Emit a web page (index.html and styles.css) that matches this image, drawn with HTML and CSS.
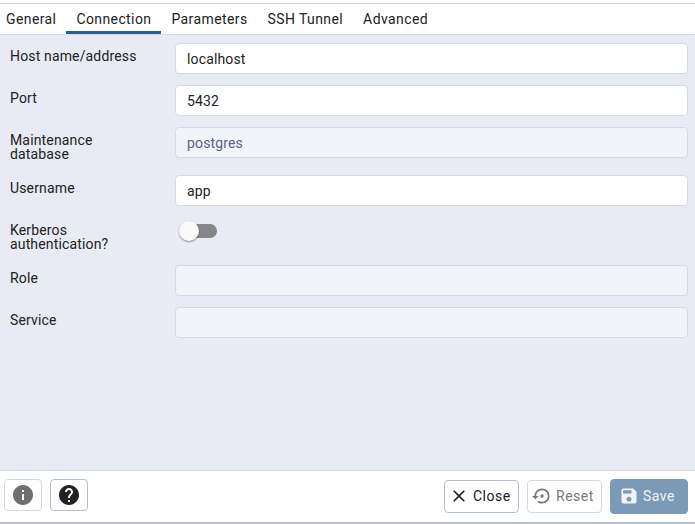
FILE: index.html
```html
<!DOCTYPE html>
<html lang="en">
<head>
<meta charset="utf-8">
<title>Register Server</title>
<link rel="stylesheet" href="styles.css">
</head>
<body>
<div class="dialog">
  <nav class="tabs">
    <a class="tab">General</a>
    <a class="tab active">Connection</a>
    <a class="tab">Parameters</a>
    <a class="tab">SSH Tunnel</a>
    <a class="tab">Advanced</a>
  </nav>
  <main class="form">
    <div class="row"><label>Host name/address</label><div class="input">localhost</div></div>
    <div class="row"><label>Port</label><div class="input">5432</div></div>
    <div class="row"><label>Maintenance database</label><div class="input disabled">postgres</div></div>
    <div class="row"><label>Username</label><div class="input">app</div></div>
    <div class="row"><label>Kerberos authentication?</label><div class="switch"><span class="thumb"></span></div></div>
    <div class="row"><label>Role</label><div class="input disabled"></div></div>
    <div class="row"><label>Service</label><div class="input disabled"></div></div>
  </main>
  <footer class="footer">
    <button class="icon-btn muted"><svg viewBox="0 0 24 24" width="24" height="24"><path d="M12 2C6.48 2 2 6.48 2 12s4.480 10 10 10 10-4.480 10-10S17.520 2 12 2zm1 15h-2v-6h2v6zm0-8h-2V7h2v2z"/></svg></button>
    <button class="icon-btn"><svg viewBox="0 0 24 24" width="24" height="24"><path d="M12 2C6.480 2 2 6.480 2 12s4.480 10 10 10 10-4.480 10-10S17.520 2 12 2zm1 17h-2v-2h2v2zm2.070-7.750l-.9.920C13.450 12.900 13 13.500 13 15h-2v-.5c0-1.100.45-2.100 1.170-2.830l1.240-1.260c.37-.36.59-.86.59-1.410 0-1.100-.9-2-2-2s-2 .9-2 2H8c0-2.210 1.790-4 4-4s4 1.790 4 4c0 .88-.36 1.680-.93 2.250z"/></svg></button>
    <span class="spacer"></span>
    <button class="btn close"><svg viewBox="0 0 24 24" width="20" height="20"><path d="M19 6.410L17.590 5 12 10.590 6.410 5 5 6.410 10.590 12 5 17.590 6.410 19 12 13.410 17.590 19 19 17.590 13.410 12z"/></svg>Close</button>
    <button class="btn reset"><svg viewBox="0 0 24 24" width="20" height="20"><path d="M14 12c0-1.100-.9-2-2-2s-2 .9-2 2 .9 2 2 2 2-.9 2-2zm-2-9c-4.970 0-9 4.030-9 9H0l4 4 4-4H5c0-3.870 3.130-7 7-7s7 3.130 7 7-3.130 7-7 7c-1.510 0-2.910-.49-4.060-1.300l-1.420 1.440C8.040 20.300 9.940 21 12 21c4.970 0 9-4.030 9-9s-4.030-9-9-9z"/></svg>Reset</button>
    <button class="btn save"><svg viewBox="0 0 24 24" width="20" height="20"><path d="M17 3H5c-1.110 0-2 .9-2 2v14c0 1.100.89 2 2 2h14c1.100 0 2-.9 2-2V7l-4-4zm-5 16c-1.660 0-3-1.340-3-3s1.340-3 3-3 3 1.340 3 3-1.340 3-3 3zm3-10H5V5h10v4z"/></svg>Save</button>
  </footer>
</div>
</body>
</html>
```
FILE: styles.css
```css
* { box-sizing: border-box; }
body {
  margin: 0;
  height: 524px;
  overflow: hidden;
  background: #fff;
  color: #222;
  font: 14px/14px Roboto, sans-serif;
  letter-spacing: 0.15px;
}
.dialog {
  display: flex;
  flex-direction: column;
  height: 524px;
  padding-top: 3px;
  border-bottom: 2px solid #b9bcc6;
}
.tabs {
  display: flex;
  height: 32px;
  border-top: 1px solid #d5d7dd;
  border-bottom: 1px solid #d5d9e2;
  letter-spacing: 0.4px;
}
.tab {
  height: 30px;
  padding: 8px 10px 0;
}
.tab:first-child { padding-left: 6px; }
.tab.active { border-bottom: 3px solid #2c5f8c; }
.form {
  flex: 1;
  display: flex;
  flex-direction: column;
  gap: 8px;
  padding: 8px 7px 0 10px;
  background: #e8ebf3;
}
.row {
  display: grid;
  grid-template-columns: 165px 1fr;
  align-items: start;
  min-height: 34px;
}
.row label { width: 140px; padding: 6px 0; }
.input {
  height: 31px;
  padding: 8px 11px;
  border: 1px solid #d6dae2;
  border-radius: 4px;
  background: #fff;
}
.input.disabled { background: #f1f4f9; color: #5d6285; }
.switch {
  position: relative;
  width: 34px;
  height: 14px;
  margin: 7px 0 0 8px;
  border-radius: 7px;
  background: #858689;
}
.thumb {
  position: absolute;
  left: -4px;
  top: -3px;
  width: 20px;
  height: 20px;
  border-radius: 50%;
  background: #fafafa;
  box-shadow: 0 1px 2px rgba(0, 0, 0, 0.4);
}
.footer {
  display: flex;
  align-items: flex-start;
  height: 52px;
  padding: 8px 7px 0 4px;
  border-top: 1px solid #d5d8e1;
  letter-spacing: 0.5px;
}
button {
  display: flex;
  align-items: center;
  padding: 0;
  border: 1px solid #b6bdcf;
  border-radius: 4px;
  background: #fff;
  color: #222;
  font: inherit;
  letter-spacing: inherit;
}
svg { fill: currentColor; flex: none; }
.icon-btn {
  justify-content: center;
  width: 38px;
  height: 32px;
  margin-right: 8px;
}
.icon-btn.muted { border-color: #d5d8e3; color: #6f6f6f; }
.spacer { flex: 1; }
.btn {
  height: 33px;
  margin-top: 1px;
  padding-bottom: 1px;
  gap: 4px;
}
.close { width: 75px; padding-left: 4px; }
.reset {
  width: 75px;
  margin-left: 8px;
  padding-left: 4px;
  border-color: #d5d8e3;
  color: #777;
}
.save {
  width: 78px;
  height: 35px;
  margin: 0 0 0 8px;
  padding-left: 8px;
  border-color: #7a9ab7;
  background: #7a9ab7;
  color: #f0f4f8;
}
```
